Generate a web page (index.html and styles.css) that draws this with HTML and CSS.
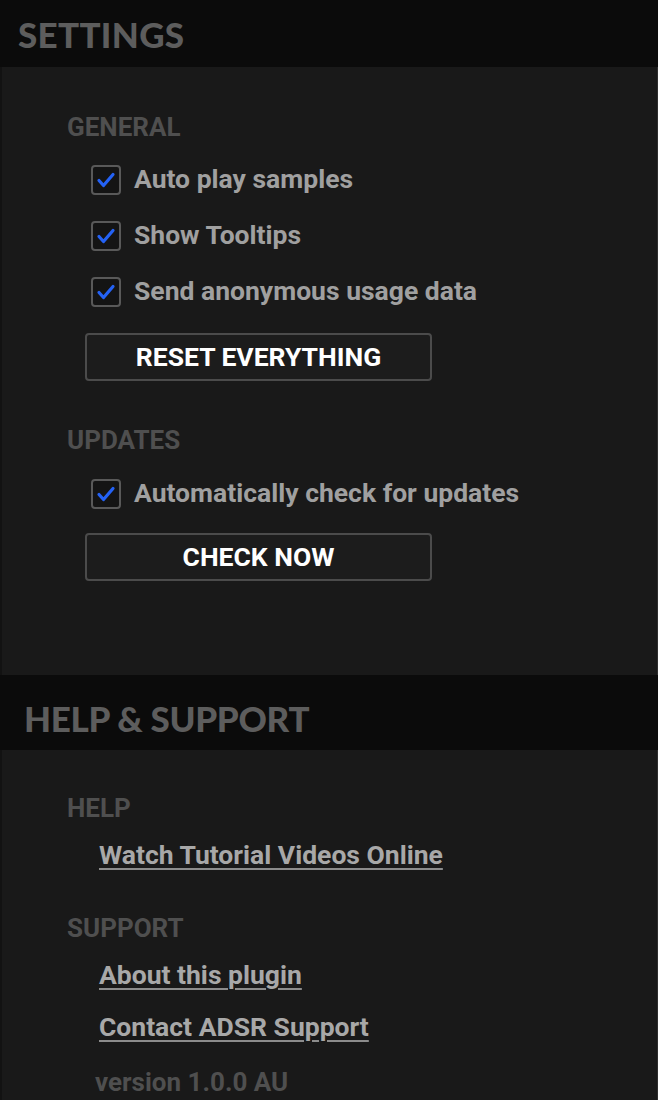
FILE: index.html
```html
<!DOCTYPE html>
<html lang="en">
<head>
    <meta charset="UTF-8">
    <meta name="viewport" content="width=device-width, initial-scale=1.0">
    <title>Settings</title>
    <link rel="stylesheet" href="styles.css">
</head>
<body>
    <div class="panel">
        <h1 class="panel-title">SETTINGS</h1>

        <div class="panel-body settings-body">
            <h2 class="group-label">GENERAL</h2>
            <div class="group">
                <label class="check-row">
                    <span class="check-box">
                        <svg viewBox="0 0 30 30"><path d="M8 15.5 L12.5 20.5 L22 9.5"/></svg>
                    </span>
                    Auto play samples
                </label>
                <label class="check-row">
                    <span class="check-box">
                        <svg viewBox="0 0 30 30"><path d="M8 15.5 L12.5 20.5 L22 9.5"/></svg>
                    </span>
                    Show Tooltips
                </label>
                <label class="check-row">
                    <span class="check-box">
                        <svg viewBox="0 0 30 30"><path d="M8 15.5 L12.5 20.5 L22 9.5"/></svg>
                    </span>
                    Send anonymous usage data
                </label>
            </div>
            <button class="action-btn">RESET EVERYTHING</button>

            <h2 class="group-label updates-label">UPDATES</h2>
            <div class="group">
                <label class="check-row">
                    <span class="check-box">
                        <svg viewBox="0 0 30 30"><path d="M8 15.5 L12.5 20.5 L22 9.5"/></svg>
                    </span>
                    Automatically check for updates
                </label>
            </div>
            <button class="action-btn">CHECK NOW</button>
        </div>

        <h1 class="panel-title help-title">HELP &amp; SUPPORT</h1>

        <div class="panel-body help-body">
            <h2 class="group-label">HELP</h2>
            <a class="link" href="#">Watch Tutorial Videos Online</a>

            <h2 class="group-label support-label">SUPPORT</h2>
            <a class="link" href="#">About this plugin</a>
            <a class="link" href="#">Contact ADSR Support</a>

            <div class="version">version 1.0.0 AU</div>
        </div>
    </div>
</body>
</html>
```

FILE: styles.css
```css
:root {
    --header-bg: #0b0b0b;
    --body-bg: #191919;
    --title-color: #5d5d5d;
    --label-color: #4f4f4f;
    --text-color: #a0a0a0;
    --check-blue: #2462f5;
}

body {
    margin: 0;
    background: var(--body-bg);
    font-family: Roboto, 'Liberation Sans', sans-serif;
    overflow: hidden;
}

.panel {
    display: flex;
    flex-direction: column;
    width: 658px;
    height: 1100px;
}

.panel-title {
    margin: 0;
    height: 67px;
    padding-left: 18px;
    display: flex;
    align-items: center;
    background: var(--header-bg);
    color: var(--title-color);
    font-family: Lato, 'Liberation Sans', sans-serif;
    font-weight: 900;
    font-size: 35px;
    letter-spacing: 0.3px;
}

.help-title {
    height: 75px;
    padding-left: 24px;
    padding-top: 11px;
    box-sizing: border-box;
    letter-spacing: -0.3px;
}

.panel-body {
    display: flex;
    flex-direction: column;
    align-items: flex-start;
    padding-left: 65px;
    border-left: 2px solid #121212;
    border-right: 1px solid #2e2e2e;
    box-sizing: border-box;
}

.settings-body {
    height: 608px;
    padding-top: 44px;
}

.help-body {
    flex: 1;
    padding-top: 42px;
}

.group-label {
    margin: 0;
    color: var(--label-color);
    font-size: 26px;
    line-height: 32px;
    font-weight: 700;
}

.group {
    display: flex;
    flex-direction: column;
    gap: 24px;
    margin-top: 19px;
    margin-left: 24px;
}

.check-row {
    display: flex;
    align-items: center;
    gap: 13px;
    height: 32px;
    color: var(--text-color);
    font-size: 26.5px;
    font-weight: 700;
}

.check-box {
    width: 30px;
    height: 30px;
    box-sizing: border-box;
    border: 2.5px solid #595959;
    border-radius: 4px;
    background: #141414;
    position: relative;
    top: 2px;
}

.check-box svg {
    display: block;
    width: 30px;
    height: 30px;
    margin: -2.5px;
}

.check-box path {
    fill: none;
    stroke: var(--check-blue);
    stroke-width: 3.2;
    stroke-linecap: round;
    stroke-linejoin: round;
}

.action-btn {
    width: 347px;
    height: 48px;
    margin-left: 18px;
    margin-top: 27px;
    padding: 0;
    border: 2px solid #4b4b4b;
    border-radius: 4px;
    background: #1c1c1c;
    color: #fff;
    font-family: Roboto, 'Liberation Sans', sans-serif;
    font-size: 26.5px;
    font-weight: 700;
    line-height: 44px;
    text-align: center;
}

.updates-label {
    margin-top: 43px;
}

.updates-label + .group {
    margin-top: 20px;
}

.updates-label + .group + .action-btn {
    margin-top: 25px;
}

.link {
    margin-left: 32px;
    margin-top: 20px;
    color: #a8a8a8;
    font-size: 26.5px;
    line-height: 32px;
    font-weight: 700;
    text-decoration: underline;
    text-decoration-thickness: 2px;
    text-underline-offset: 4px;
    text-decoration-color: #8c8c8c;
}

.group-label + .link {
    margin-top: 15px;
}

.support-label {
    margin-top: 41px;
}

.version {
    margin-left: 28px;
    margin-top: 23px;
    color: var(--label-color);
    font-size: 26px;
    line-height: 32px;
    font-weight: 700;
}
```
